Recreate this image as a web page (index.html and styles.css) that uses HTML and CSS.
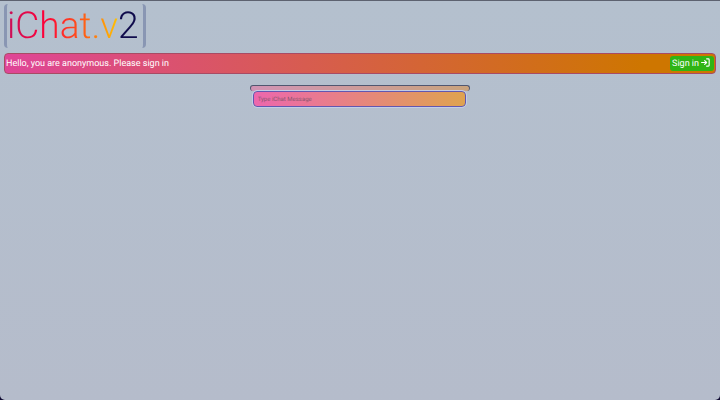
FILE: index.html
```
<!DOCTYPE html>
<html lang="en">
<head>
<meta charset="utf-8">
<meta name="viewport" content="width=device-width, initial-scale=1">
<title>iChat.v2</title>
<link rel="stylesheet" href="styles.css">
</head>
<body>
<div class="app">
  <header class="brand">
    <h1 class="logo">iChat.v2</h1>
  </header>
  <div class="bar">
    <p class="greeting">Hello, you are anonymous. Please sign in</p>
    <button class="sign-in" type="button">
      <span>Sign in</span>
      <svg class="sign-in-icon" viewBox="0 0 16 16" aria-hidden="true">
        <path d="M1 8h9M6.500 4.500l3.500 3.500L6.500 11.500M10 1.500h3a1.500 1.500 0 0 1 1.500 1.500v10A1.500 1.500 0 0 1 13 14.500h-3"/>
      </svg>
    </button>
  </div>
  <main class="chat">
    <div class="messages"></div>
    <form class="composer">
      <input class="message" type="text" placeholder="Type iChat Message" aria-label="Type iChat Message">
    </form>
  </main>
</div>
</body>
</html>
```
FILE: styles.css
```
* {
  box-sizing: border-box;
}

body {
  margin: 0;
  background: #100b32;
  font-family: Roboto, "Liberation Sans", sans-serif;
  text-rendering: geometricPrecision;
}

.app {
  min-height: 100vh;
  padding: 3px 4px;
  border-top: 1px solid #5d6270;
  border-radius: 0 0 5px 5px;
  background: linear-gradient(#b4c0ce, #b5bccb);
}

.brand {
  display: flex;
  margin-bottom: 5px;
}

.logo {
  margin: 0;
  padding: 2px 4px 0 0;
  border: solid #8996b3;
  border-width: 0 3px;
  border-radius: 4px;
  font: 300 37px/42px Roboto, "Liberation Sans", sans-serif;
  color: transparent;
  background: linear-gradient(90deg, #c80f59, #ff0038 28%, #ff6a13 60%, #ffc400 82%, #100b4c 83%);
  background-clip: text;
}

.bar {
  display: flex;
  align-items: center;
  justify-content: space-between;
  min-height: 21px;
  padding: 0 1px;
  border: 1px solid #a84b64;
  border-radius: 4px;
  background: linear-gradient(90deg, #df4597, #ce7600 90%);
}

.greeting {
  margin: 0;
  font-size: 9px;
  line-height: 12px;
  color: #fff;
}

.sign-in {
  display: flex;
  align-items: center;
  gap: 2px;
  height: 15px;
  padding: 0 4px 0 2px;
  border: 0;
  border-radius: 3px;
  background: #2fb414;
  color: #fff;
  font: 9px/12px Roboto, "Liberation Sans", sans-serif;
  text-rendering: inherit;
}

.sign-in-icon {
  width: 9px;
  height: 9px;
  margin-bottom: 2px;
  fill: none;
  stroke: currentColor;
  stroke-width: 2;
  stroke-linecap: round;
  stroke-linejoin: round;
}

.chat {
  width: 31%;
  margin: 11px auto 0;
}

.messages {
  height: 6px;
  border: 1px solid #51566f;
  border-bottom: 0;
  border-radius: 3px;
  background: linear-gradient(90deg, #d193b5, #c9a37d);
}

.composer {
  display: flex;
  padding: 0 4px 0 3px;
}

.message {
  flex: 1;
  min-width: 0;
  height: 16px;
  padding: 0 4px;
  border: 1px solid #6257b0;
  border-radius: 4px;
  outline: 1px solid #c3cde6;
  background: linear-gradient(90deg, #ed67ad, #dfa34f);
  color: #51475b;
  font: 6px/12px Roboto, "Liberation Sans", sans-serif;
  text-rendering: inherit;
}

.message::placeholder {
  color: #88566f;
  opacity: 1;
}
```
